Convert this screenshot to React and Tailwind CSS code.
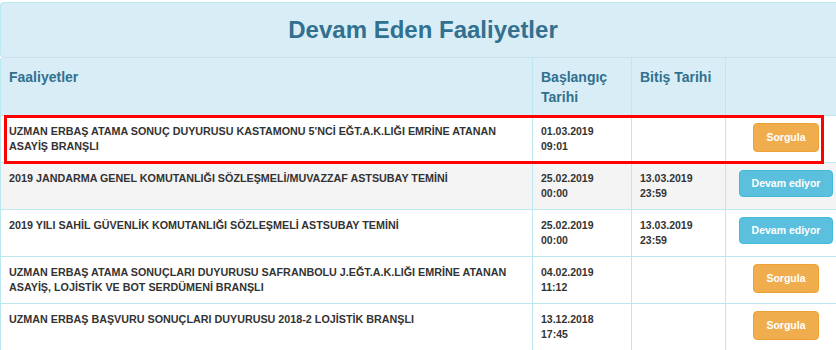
import React from "react";

const rows = [
  {
    name: "UZMAN ERBAŞ ATAMA SONUÇ DUYURUSU KASTAMONU 5'NCİ EĞT.A.K.LIĞI EMRİNE ATANAN ASAYİŞ BRANŞLI",
    start: ["01.03.2019", "09:01"],
    end: null,
    action: "sorgula",
  },
  {
    name: "2019 JANDARMA GENEL KOMUTANLIĞI SÖZLEŞMELİ/MUVAZZAF ASTSUBAY TEMİNİ",
    start: ["25.02.2019", "00:00"],
    end: ["13.03.2019", "23:59"],
    action: "devam",
    striped: true,
  },
  {
    name: "2019 YILI SAHİL GÜVENLİK KOMUTANLIĞI SÖZLEŞMELİ ASTSUBAY TEMİNİ",
    start: ["25.02.2019", "00:00"],
    end: ["13.03.2019", "23:59"],
    action: "devam",
  },
  {
    name: "UZMAN ERBAŞ ATAMA SONUÇLARI DUYURUSU SAFRANBOLU J.EĞT.A.K.LIĞI EMRİNE ATANAN ASAYİŞ, LOJİSTİK VE BOT SERDÜMENİ BRANŞLI",
    start: ["04.02.2019", "11:12"],
    end: null,
    action: "sorgula",
  },
  {
    name: "UZMAN ERBAŞ BAŞVURU SONUÇLARI DUYURUSU 2018-2 LOJİSTİK BRANŞLI",
    start: ["13.12.2018", "17:45"],
    end: null,
    action: "sorgula",
  },
];

const DateCell = ({ value }) => (
  <td className="border border-[#bce8f1] px-[8px] pt-[8px] pb-[8px] align-top text-[10.5px] leading-[15px] font-bold text-[#333]">
    {value && (
      <>
        {value[0]}
        <br />
        {value[1]}
      </>
    )}
  </td>
);

const ActionButton = ({ kind }) =>
  kind === "sorgula" ? (
    <button className="rounded-[4px] border border-[#eea236] bg-[#f0ad4e] px-[12px] py-[6px] text-[10.5px] leading-[15px] font-bold text-white">
      Sorgula
    </button>
  ) : (
    <button className="rounded-[4px] border border-[#46b8da] bg-[#5bc0de] px-[12px] py-[5px] text-[10.5px] leading-[15px] font-bold text-white">
      Devam ediyor
    </button>
  );

export default function App() {
  return (
    <div className="w-[836px] h-[350px] overflow-hidden bg-white font-['Liberation_Sans',Arial,sans-serif]">
      <div className="relative w-[846px] pt-[2px]">
        <div className="flex h-[56px] items-center justify-center rounded-[4px] border border-[#bce8f1] border-b-[#cadfe8] bg-[#d9edf7]">
          <h3 className="text-[24px] font-bold leading-none text-[#31708f]">Devam Eden Faaliyetler</h3>
        </div>

        <table className="w-[846px] table-fixed border-collapse">
          <colgroup>
            <col className="w-[532px]" />
            <col className="w-[99px]" />
            <col className="w-[94px]" />
            <col className="w-[121px]" />
          </colgroup>
          <thead>
            <tr className="bg-[#d9edf7] text-left text-[14px] leading-[20px] font-bold text-[#31708f]">
              <th className="border border-t-0 border-[#bce8f1] px-[8px] pt-[9px] pb-[8px] align-top">Faaliyetler</th>
              <th className="border border-t-0 border-[#bce8f1] px-[8px] pt-[9px] pb-[8px] align-top">Başlangıç Tarihi</th>
              <th className="border border-t-0 border-[#bce8f1] px-[8px] pt-[9px] pb-[8px] align-top">Bitiş Tarihi</th>
              <th className="border border-t-0 border-[#bce8f1] px-[8px] pt-[9px] pb-[8px] align-top"></th>
            </tr>
          </thead>
          <tbody>
            {rows.map((r, i) => (
              <tr key={i} className={r.striped ? "bg-[#f4f4f4]" : "bg-white"}>
                <td className="border border-[#bce8f1] px-[8px] py-[8px] align-top text-[10.75px] leading-[15px] font-bold text-[#333]">
                  {r.name}
                </td>
                <DateCell value={r.start} />
                <DateCell value={r.end} />
                <td className="border border-[#bce8f1] px-[8px] py-[7px] align-top text-center">
                  <ActionButton kind={r.action} />
                </td>
              </tr>
            ))}
          </tbody>
        </table>

        <div className="pointer-events-none absolute left-[4px] top-[115px] h-[49px] w-[820px] border-[3px] border-[#ff0000]" />
      </div>
    </div>
  );
}
